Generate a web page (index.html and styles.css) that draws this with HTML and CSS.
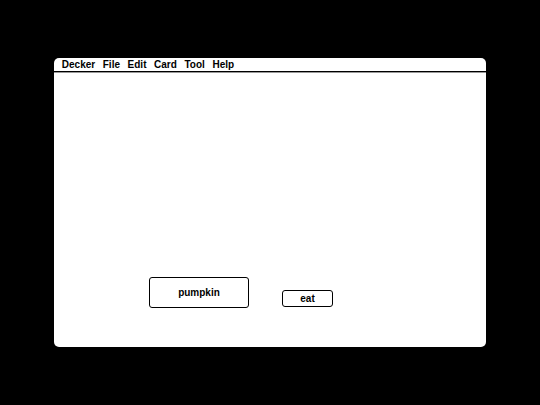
FILE: index.html
```html
<!DOCTYPE html>
<html>
<head>
<meta charset="utf-8">
<link rel="stylesheet" href="styles.css">
</head>
<body>
<div class="screen">
  <div class="menubar">
    <span class="menu">Decker</span>
    <span class="menu">File</span>
    <span class="menu">Edit</span>
    <span class="menu">Card</span>
    <span class="menu">Tool</span>
    <span class="menu">Help</span>
  </div>
  <div class="card">
    <div class="btn btn-pumpkin">pumpkin</div>
    <div class="btn btn-eat">eat</div>
  </div>
</div>
</body>
</html>
```
FILE: styles.css
```css
html, body {
  margin: 0;
  padding: 0;
  background: #000;
  width: 540px;
  height: 405px;
  overflow: hidden;
}
body {
  padding-top: 58px;
  box-sizing: border-box;
  font-family: "Liberation Sans", Arial, sans-serif;
}
.screen {
  margin-left: 54px;
  width: 432px;
  height: 289px;
  background: #fff;
  border-radius: 5px;
  display: flex;
  flex-direction: column;
  overflow: hidden;
}
.menubar {
  height: 13px;
  border-bottom: 1px solid #000;
  box-shadow: 0 1px 0 #999;
  display: flex;
  align-items: center;
  padding-left: 4px;
  font-weight: bold;
  font-size: 10px;
  color: #000;
}
.menu {
  padding: 0 3.8px;
  line-height: 13px;
}
.card {
  position: relative;
  flex: 1;
}
.btn {
  position: absolute;
  box-sizing: border-box;
  border: 1px solid #000;
  border-radius: 3px;
  background: #fff;
  font-weight: bold;
  font-size: 10px;
  display: flex;
  align-items: center;
  justify-content: center;
  color: #000;
}
.btn-pumpkin {
  left: 95px;
  top: 205px;
  width: 100px;
  height: 31px;
  padding-bottom: 1px;
}
.btn-eat {
  left: 228px;
  top: 218px;
  width: 51px;
  height: 17px;
}
```
